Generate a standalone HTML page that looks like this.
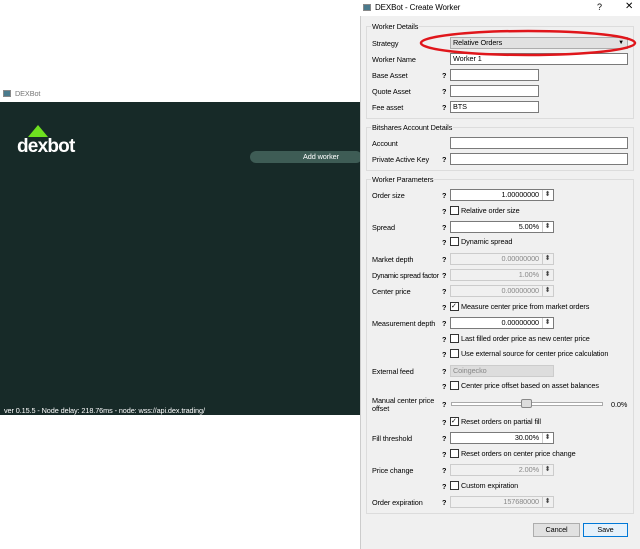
<!DOCTYPE html>
<html><head><meta charset="utf-8"><style>
*{margin:0;padding:0;box-sizing:border-box}
body{width:640px;height:549px;position:relative;background:#fff;font-family:"Liberation Sans",sans-serif;font-size:7.3px;color:#000;overflow:hidden;letter-spacing:-0.1px}
.a{position:absolute;white-space:nowrap}
.f{position:absolute;height:12px;background:#fff;border:1px solid #7a7a7a;font-size:7.3px;line-height:10px;padding:0 2px}
.sp{text-align:right;padding-right:14px}
.sp:after{content:"⬍";position:absolute;right:1px;top:0;width:9px;height:10px;border-left:1px solid #ccc;font-size:7px;line-height:10px;text-align:center;color:#444}
.dis{background:#f0f0f0;border-color:#ccc;color:#888}
.q{position:absolute;left:442px;font-weight:bold;font-size:7.3px}
.cb{position:absolute;left:450px;width:9px;height:9px;border:1px solid #333;background:#fff}
.g{position:absolute;left:366px;width:268px;border:1px solid #dcdcdc}
.gl{position:absolute;left:371px;background:#f0f0f0;padding:0 1px}
</style></head><body>
<div class="a" style="left:0;top:86px;width:360px;height:16px;background:#fff"></div>
<div class="a" style="left:3px;top:90px;width:8px;height:7px;background:#4a7a8c;border:1px solid #888"></div>
<div class="a" style="left:15px;top:89px;color:#777">DEXBot</div>
<div class="a" style="left:0;top:102px;width:360px;height:313px;background:#172a28"></div>
<svg class="a" style="left:26px;top:125px" width="24" height="14"><polygon points="12,0 22,12 2,12" fill="#6ee01f"/></svg>
<div class="a" style="left:17px;top:136px;color:#fff;font-size:19px;font-weight:bold;letter-spacing:-0.8px">dexbot</div>
<div class="a" style="left:250px;top:151px;width:112px;height:12px;background:#3e5c55;border-radius:6px;color:#fff;font-size:7.3px;line-height:12px;padding-left:53px">Add worker</div>
<div class="a" style="left:4px;top:406px;color:#fff;font-size:7.3px">ver 0.15.5 - Node delay: 218.76ms - node: wss://api.dex.trading/</div>
<div class="a" style="left:360px;top:0;width:280px;height:549px;background:#f0f0f0;border-left:1px solid #ccc"></div>
<div class="a" style="left:360px;top:0;width:280px;height:16px;background:#fff"></div>
<div class="a" style="left:363px;top:4px;width:8px;height:7px;background:#4a7a8c;border:1px solid #888"></div>
<div class="a" style="left:375px;top:3px;font-size:8px">DEXBot - Create Worker</div>
<div class="a" style="left:597px;top:2px;font-size:9px">?</div>
<div class="a" style="left:625px;top:1px;font-size:10px">✕</div>

<div class="g" style="top:26px;height:93px"></div><div class="gl" style="top:22px">Worker Details</div>
<div class="a" style="left:372px;top:39px">Strategy</div>
<div class="f" style="left:450px;top:37px;width:178px;background:#e1e1e1;border-color:#adadad">Relative Orders<span style="position:absolute;right:3px;font-size:6px">▼</span></div>
<div class="a" style="left:372px;top:55px">Worker Name</div><div class="f" style="left:450px;top:53px;width:178px">Worker 1</div>
<div class="a" style="left:372px;top:71px">Base Asset</div><div class="q" style="top:71px">?</div><div class="f" style="left:450px;top:69px;width:89px"></div>
<div class="a" style="left:372px;top:87px">Quote Asset</div><div class="q" style="top:87px">?</div><div class="f" style="left:450px;top:85px;width:89px"></div>
<div class="a" style="left:372px;top:103px">Fee asset</div><div class="q" style="top:103px">?</div><div class="f" style="left:450px;top:101px;width:89px">BTS</div>
<svg class="a" style="left:418px;top:27px" width="222" height="32"><ellipse cx="110" cy="16" rx="107" ry="12" fill="none" stroke="#e0161b" stroke-width="2.5"/></svg>

<div class="g" style="top:127px;height:44px"></div><div class="gl" style="top:123px">Bitshares Account Details</div>
<div class="a" style="left:372px;top:139px">Account</div><div class="f" style="left:450px;top:137px;width:178px"></div>
<div class="a" style="left:372px;top:155px">Private Active Key</div><div class="q" style="top:155px">?</div><div class="f" style="left:450px;top:153px;width:178px"></div>

<div class="g" style="top:179px;height:335px"></div><div class="gl" style="top:175px">Worker Parameters</div>
<div class="a" style="left:372px;top:191px">Order size</div><div class="q" style="top:191px">?</div><div class="f sp" style="left:450px;top:189px;width:104px">1.00000000</div>
<div class="q" style="top:207px">?</div><div class="cb" style="top:206px"></div><div class="a" style="left:461px;top:206px">Relative order size</div>
<div class="a" style="left:372px;top:223px">Spread</div><div class="q" style="top:223px">?</div><div class="f sp" style="left:450px;top:221px;width:104px">5.00%</div>
<div class="q" style="top:238px">?</div><div class="cb" style="top:237px"></div><div class="a" style="left:461px;top:237px">Dynamic spread</div>
<div class="a" style="left:372px;top:255px">Market depth</div><div class="q" style="top:255px">?</div><div class="f sp dis" style="left:450px;top:253px;width:104px">0.00000000</div>
<div class="a" style="left:372px;top:271px;letter-spacing:-0.3px">Dynamic spread factor</div><div class="q" style="top:271px">?</div><div class="f sp dis" style="left:450px;top:269px;width:104px">1.00%</div>
<div class="a" style="left:372px;top:287px">Center price</div><div class="q" style="top:287px">?</div><div class="f sp dis" style="left:450px;top:285px;width:104px">0.00000000</div>
<div class="q" style="top:303px">?</div><div class="cb" style="top:302px;font-size:7px;line-height:7px">✓</div><div class="a" style="left:461px;top:302px">Measure center price from market orders</div>
<div class="a" style="left:372px;top:319px">Measurement depth</div><div class="q" style="top:319px">?</div><div class="f sp" style="left:450px;top:317px;width:104px">0.00000000</div>
<div class="q" style="top:335px">?</div><div class="cb" style="top:334px"></div><div class="a" style="left:461px;top:334px">Last filled order price as new center price</div>
<div class="q" style="top:350px">?</div><div class="cb" style="top:349px"></div><div class="a" style="left:461px;top:349px">Use external source for center price calculation</div>
<div class="a" style="left:372px;top:367px">External feed</div><div class="q" style="top:367px">?</div><div class="f dis" style="left:450px;top:365px;width:104px;background:#ddd">Coingecko</div>
<div class="q" style="top:382px">?</div><div class="cb" style="top:381px"></div><div class="a" style="left:461px;top:381px">Center price offset based on asset balances</div>
<div class="a" style="left:372px;top:396px">Manual center price</div><div class="a" style="left:372px;top:404px">offset</div><div class="q" style="top:400px">?</div>
<div class="a" style="left:451px;top:402px;width:152px;height:4px;border:1px solid #aaa;background:#fff"></div>
<div class="a" style="left:521px;top:399px;width:11px;height:9px;background:#ddd;border:1px solid #888;border-radius:2px"></div>
<div class="a" style="left:611px;top:400px">0.0%</div>
<div class="q" style="top:418px">?</div><div class="cb" style="top:417px;font-size:7px;line-height:7px">✓</div><div class="a" style="left:461px;top:417px">Reset orders on partial fill</div>
<div class="a" style="left:372px;top:434px">Fill threshold</div><div class="q" style="top:434px">?</div><div class="f sp" style="left:450px;top:432px;width:104px">30.00%</div>
<div class="q" style="top:450px">?</div><div class="cb" style="top:449px"></div><div class="a" style="left:461px;top:449px">Reset orders on center price change</div>
<div class="a" style="left:372px;top:466px">Price change</div><div class="q" style="top:466px">?</div><div class="f sp dis" style="left:450px;top:464px;width:104px">2.00%</div>
<div class="q" style="top:482px">?</div><div class="cb" style="top:481px"></div><div class="a" style="left:461px;top:481px">Custom expiration</div>
<div class="a" style="left:372px;top:498px">Order expiration</div><div class="q" style="top:498px">?</div><div class="f sp dis" style="left:450px;top:496px;width:104px">157680000</div>

<div class="a" style="left:533px;top:523px;width:47px;height:14px;background:#e1e1e1;border:1px solid #adadad;text-align:center;line-height:12px">Cancel</div>
<div class="a" style="left:583px;top:523px;width:45px;height:14px;background:#e5f1fb;border:1px solid #0078d7;text-align:center;line-height:12px">Save</div>
</body></html>
